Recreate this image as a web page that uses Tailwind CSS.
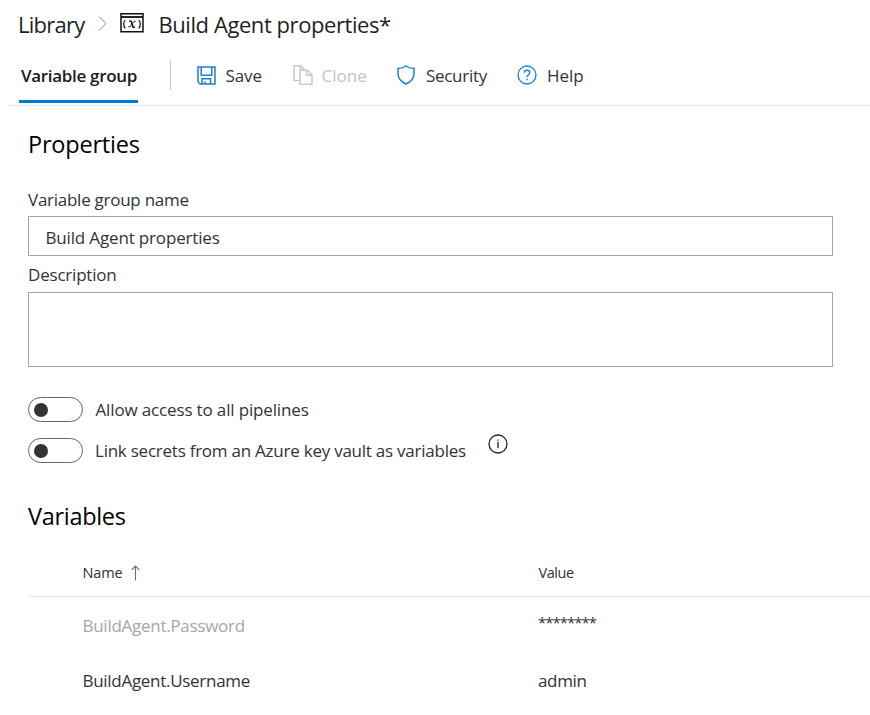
<!DOCTYPE html>
<html lang="en">
<head>
<meta charset="utf-8">
<title>Library - Build Agent properties</title>
<script src="https://cdn.jsdelivr.net/npm/@tailwindcss/browser@4"></script>
</head>
<body class="w-[870px] h-[715px] overflow-hidden bg-white font-['Open_Sans','Noto_Sans',sans-serif] text-[17px] leading-6 text-[#333333] whitespace-nowrap">
  <header class="flex h-12 items-center pl-[18px] text-[22px] leading-8 text-[#1f1f1f]">
    <span class="w-[80px] tracking-[-0.75px]">Library</span>
    <svg class="-mt-0.5 w-[9px] h-[15px]" viewBox="0 0 9 15" fill="none" stroke="#888" stroke-width="1"><path d="M1 .7 8 7.5 1 14.3"/></svg>
    <svg class="-mt-0.5 ml-[13px] w-6 h-5" viewBox="0 0 24 20" fill="none" stroke="#111">
      <path d="M1 .75h22v18H1z" stroke-width="1.5"/>
      <path d="M1 4h22" stroke-width="1.8"/>
      <path d="M5.2 7q-3 4 0 8.5M18.8 7q3 4 0 8.5" stroke-width="1.2"/>
      <path d="M9.3 8.4q1.7-1 2.2.9l1.2 4q.5 1.7 2.1.6" stroke-width="1.6"/>
      <path d="M15.7 8.3q-1.8-.5-3.2 2l-1.2 2q-1.4 2-3 1.5" stroke-width="1"/>
    </svg>
    <h1 class="ml-[14.5px] tracking-[-0.43px]">Build Agent properties*</h1>
  </header>

  <nav class="ml-2 flex h-[58px] border-b border-[#e6e6e6] pl-[11px]">
    <div class="flex h-[55px] w-[119px] border-b-3 border-[#0078d4] pt-4 pl-[2px] font-semibold text-[#1b1b1b] tracking-[-0.32px]">Variable group</div>
    <div class="mt-3 ml-8 h-[30px] w-px bg-[#c8c8c8]"></div>
    <div class="flex h-14 items-center pl-[26px]">
      <svg class="w-[19px] h-[19px] -mt-0.5" viewBox="0 0 19 19" fill="none" stroke="#1b80dc" stroke-width="1.5"><path d="M1 1h17v17H3.2L1 15.8zM4.2 1v8.3h10.6V1M5 18v-5.2h8.5V18M8 18v-2.5"/></svg>
      <span class="ml-[9.5px] w-[67px] tracking-[-0.1px]">Save</span>
      <svg class="w-5 h-5 -mt-[3px]" viewBox="0 0 20 20" fill="none" stroke="#cacaca" stroke-width="1.5"><path d="M6.5 15.5H1V.8h6.7l4 4M7 5h7l5 5v9.2H7zM13.5 5v5.3H19M7.5 1v3.5"/></svg>
      <span class="ml-[9px] w-[75.5px] text-[#c4c4c4] tracking-[0px]">Clone</span>
      <svg class="w-[18px] h-5 -mt-[3px]" viewBox="0 0 18 20" fill="none" stroke="#1b80dc" stroke-width="1.5"><path d="M9 1Q6 3.3 1 3.4V8.5Q1 15.5 9 19 17 15.5 17 8.5V3.4Q12 3.3 9 1z"/></svg>
      <span class="ml-[11px] w-[91px] tracking-[-0.3px]">Security</span>
      <svg class="w-5 h-5 -mt-[3px]" viewBox="0 0 20 20" fill="none" stroke="#1b80dc" stroke-width="1.3"><circle cx="10" cy="10" r="9"/><path d="M7.3 7.8Q7.3 5.2 10 5.2T12.7 7.7C12.7 9.6 10 9.8 10 12.3" stroke-width="1.4"/><path d="M10 13.7v1.5" stroke-width="1.5"/></svg>
      <span class="ml-[10px]">Help</span>
    </div>
  </nav>

  <main class="pl-7">
    <h2 class="mt-[22px] h-8 text-[23.5px] leading-8 text-black tracking-[-0.2px]">Properties</h2>
    <label class="mt-7 block h-6 tracking-[-0.26px]">Variable group name</label>
    <div class="mt-1 flex h-10 w-[805px] items-center border-[1.5px] border-[#a6a6a6] pt-1 pl-[16.5px] tracking-[-0.16px]">Build Agent properties</div>
    <label class="mt-[7px] block h-6 tracking-[-0.2px]">Description</label>
    <div class="mt-[5px] h-[75px] w-[805px] border-[1.5px] border-[#a6a6a6]"></div>

    <div class="mt-[30px] flex h-[25px] items-center">
      <div class="flex h-[25px] w-[55px] items-center rounded-full border-[1.5px] border-[#666] pl-[5px]"><div class="size-3.5 rounded-full bg-[#333]"></div></div>
      <span class="ml-[12.5px] tracking-[-0.15px]">Allow access to all pipelines</span>
    </div>
    <div class="mt-4 flex h-[25px] items-center">
      <div class="flex h-[25px] w-[55px] items-center rounded-full border-[1.5px] border-[#666] pl-[5px]"><div class="size-3.5 rounded-full bg-[#333]"></div></div>
      <span class="ml-[12px] w-[392.5px] tracking-[-0.24px]">Link secrets from an Azure key vault as variables</span>
      <svg class="mb-[13px] w-5 h-5" viewBox="0 0 20 20" fill="none" stroke="#222" stroke-width="1.3"><circle cx="10" cy="10" r="9"/><path d="M10 8v6.3M10 5.4v1.4"/></svg>
    </div>

    <h2 class="mt-[37px] h-8 text-[23.5px] leading-8 text-black tracking-[-0.3px]">Variables</h2>
    <div class="mt-[17px] grid h-[48px] grid-cols-[455px_1fr] items-center border-b border-[#e6e6e6] pl-[54.5px] text-[14.5px]">
      <div class="flex items-center"><span class="w-[48px] tracking-[-0.1px]">Name</span>
        <svg class="w-[9px] h-4" viewBox="0 0 9 16" fill="none" stroke="#776c6c" stroke-width="1.1"><path d="M4.5 15.5V1M.7 4.8 4.5 1l3.8 3.8"/></svg></div>
      <span class="pl-px tracking-[-0.45px]">Value</span>
    </div>
    <div class="grid h-[57px] grid-cols-[455px_1fr] items-center pl-[54.5px]">
      <span class="text-[#a6a6a6] tracking-[-0.27px]">BuildAgent.Password</span>
      <span class="pl-[0.5px] pb-2 text-[15px] tracking-[-1px]">********</span>
    </div>
    <div class="grid h-[54px] grid-cols-[455px_1fr] items-center pl-[54.5px]">
      <span class="tracking-[-0.29px]">BuildAgent.Username</span>
      <span class="pl-[0.5px] tracking-[-0.35px]">admin</span>
    </div>
  </main>
</body>
</html>
